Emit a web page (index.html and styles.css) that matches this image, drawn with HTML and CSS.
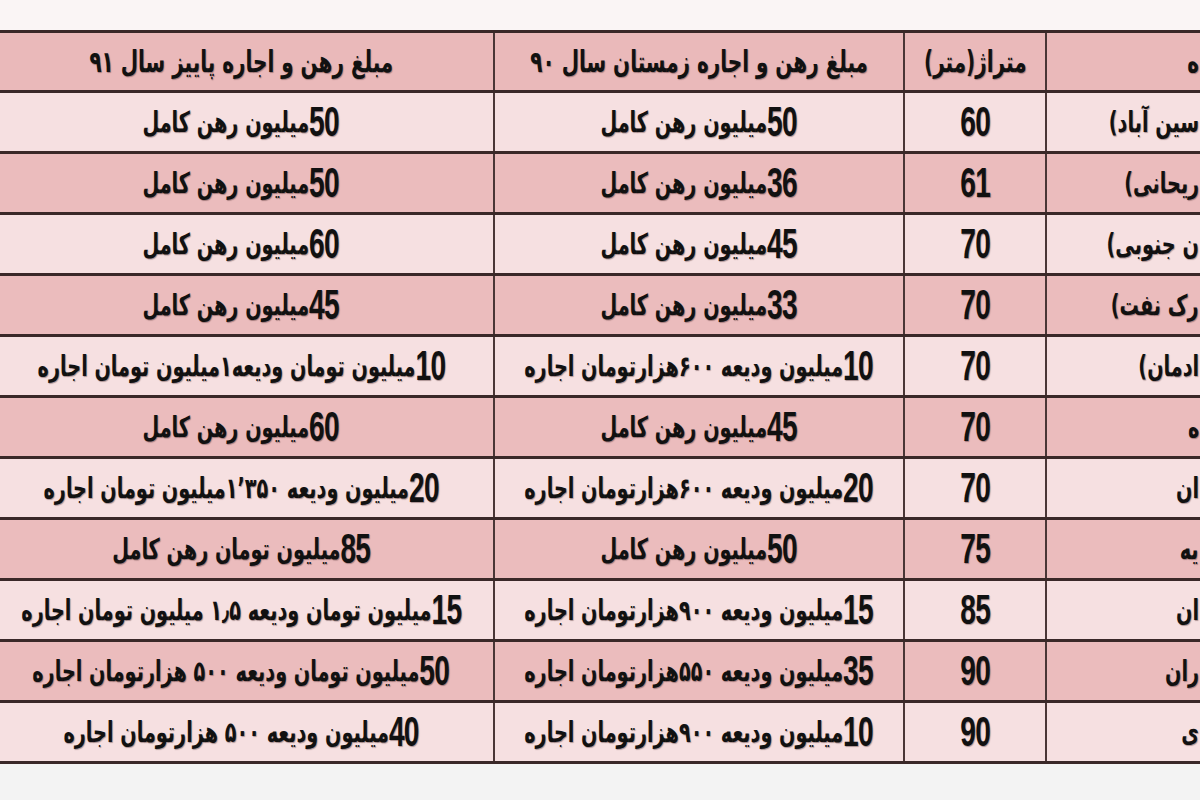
FILE: index.html
```html
<!DOCTYPE html>
<html lang="fa">
<head>
<meta charset="utf-8">
<title>جدول رهن و اجاره</title>
<link rel="stylesheet" href="styles.css">
</head>
<body>
<div class="topstrip"></div>
<div class="wrap">
<table class="rent" dir="rtl">
  <colgroup>
    <col class="c-area">
    <col class="c-size">
    <col class="c-win">
    <col class="c-aut">
  </colgroup>
  <thead>
    <tr>
      <th class="area"><span class="t">ه</span></th>
      <th><span class="t">متراژ(متر)</span></th>
      <th><span class="t">مبلغ رهن و اجاره زمستان سال ۹۰</span></th>
      <th><span class="t">مبلغ رهن و اجاره پاییز سال ۹۱</span></th>
    </tr>
  </thead>
  <tbody>
    <tr class="lt"><td class="area"><span class="t">سین آباد)</span></td><td><span class="t"><span class="num">60</span></span></td><td><span class="t"><span class="num">50</span>میلیون رهن کامل</span></td><td><span class="t"><span class="num">50</span>میلیون رهن کامل</span></td></tr>
    <tr class="dk"><td class="area"><span class="t">ریحانی)</span></td><td><span class="t"><span class="num">61</span></span></td><td><span class="t"><span class="num">36</span>میلیون رهن کامل</span></td><td><span class="t"><span class="num">50</span>میلیون رهن کامل</span></td></tr>
    <tr class="lt"><td class="area"><span class="t">ن جنوبی)</span></td><td><span class="t"><span class="num">70</span></span></td><td><span class="t"><span class="num">45</span>میلیون رهن کامل</span></td><td><span class="t"><span class="num">60</span>میلیون رهن کامل</span></td></tr>
    <tr class="dk"><td class="area"><span class="t">رک نفت)</span></td><td><span class="t"><span class="num">70</span></span></td><td><span class="t"><span class="num">33</span>میلیون رهن کامل</span></td><td><span class="t"><span class="num">45</span>میلیون رهن کامل</span></td></tr>
    <tr class="lt"><td class="area"><span class="t">ادمان)</span></td><td><span class="t"><span class="num">70</span></span></td><td><span class="t"><span class="num">10</span>میلیون ودیعه ۶۰۰هزارتومان اجاره</span></td><td><span class="t"><span class="num">10</span>میلیون تومان ودیعه۱میلیون تومان اجاره</span></td></tr>
    <tr class="dk"><td class="area"><span class="t">ه</span></td><td><span class="t"><span class="num">70</span></span></td><td><span class="t"><span class="num">45</span>میلیون رهن کامل</span></td><td><span class="t"><span class="num">60</span>میلیون رهن کامل</span></td></tr>
    <tr class="lt"><td class="area"><span class="t">ان</span></td><td><span class="t"><span class="num">70</span></span></td><td><span class="t"><span class="num">20</span>میلیون ودیعه ۶۰۰هزارتومان اجاره</span></td><td><span class="t"><span class="num">20</span>میلیون ودیعه ۱٬۳۵۰میلیون تومان اجاره</span></td></tr>
    <tr class="dk"><td class="area"><span class="t">یه</span></td><td><span class="t"><span class="num">75</span></span></td><td><span class="t"><span class="num">50</span>میلیون رهن کامل</span></td><td><span class="t"><span class="num">85</span>میلیون تومان رهن کامل</span></td></tr>
    <tr class="lt"><td class="area"><span class="t">ان</span></td><td><span class="t"><span class="num">85</span></span></td><td><span class="t"><span class="num">15</span>میلیون ودیعه ۹۰۰هزارتومان اجاره</span></td><td><span class="t"><span class="num">15</span>میلیون تومان ودیعه ۱٫۵ میلیون تومان اجاره</span></td></tr>
    <tr class="dk"><td class="area"><span class="t">ران</span></td><td><span class="t"><span class="num">90</span></span></td><td><span class="t"><span class="num">35</span>میلیون ودیعه ۵۵۰هزارتومان اجاره</span></td><td><span class="t"><span class="num">50</span>میلیون تومان ودیعه ۵۰۰ هزارتومان اجاره</span></td></tr>
    <tr class="lt"><td class="area"><span class="t">ی</span></td><td><span class="t"><span class="num">90</span></span></td><td><span class="t"><span class="num">10</span>میلیون ودیعه ۹۰۰هزارتومان اجاره</span></td><td><span class="t"><span class="num">40</span>میلیون ودیعه ۵۰۰ هزارتومان اجاره</span></td></tr>
  </tbody>
</table>
</div>
</body>
</html>
```

FILE: styles.css
```css
html, body {
  margin: 0;
  padding: 0;
  overflow: hidden;
  background: #f3f3f3;
  width: 1200px;
  height: 800px;
}

.topstrip {
  height: 30px;
  background: #faf5f5;
}

.wrap {
  margin-left: -13px;
  width: 1213px;
}

.rent {
  border-collapse: collapse;
  table-layout: fixed;
  width: 1215px;
  font-family: "DejaVu Sans", sans-serif;
  font-weight: bold;
  color: #111;
  text-shadow: 1px 1px 1px rgba(60, 30, 30, 0.4);
}

.c-area { width: 157px; }
.c-size { width: 142px; }
.c-win  { width: 410px; }
.c-aut  { width: 506px; }

.rent th,
.rent td {
  border-top: 3px solid #3a2828;
  border-bottom: 3px solid #3a2828;
  border-left: 2px solid #4a3636;
  border-right: 2px solid #4a3636;
  text-align: center;
  vertical-align: middle;
  padding: 0;
  white-space: nowrap;
  overflow: hidden;
}

.rent th.area,
.rent td.area {
  text-align: right;
  padding-right: 4px;
  border-right: 0;
}

.t {
  display: inline-block;
  transform: scale(0.74, 1.1);
  white-space: nowrap;
}

.rent th .t {
  margin: 0 -60px;
}

.rent td .t {
  margin: 0 -60px;
}

.rent th.area .t,
.rent td.area .t {
  margin: 0;
  transform-origin: right center;
}

.rent th {
  height: 57px;
  background: #eab9ba;
  font-size: 27px;
  font-weight: bold;
}

.rent td {
  height: 58px;
  font-size: 26px;
}

.rent tr.lt td {
  background: #f6e0e1;
}

.rent tr.dk td {
  background: #ebbcbd;
}

.num {
  display: inline-block;
  font-family: "Liberation Sans", sans-serif;
  font-weight: bold;
  font-size: 38px;
  vertical-align: -4px;
  letter-spacing: -1px;
}
```
